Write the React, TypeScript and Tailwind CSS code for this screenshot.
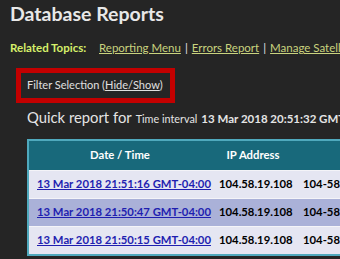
import React from "react";

const rows = [
  { time: "13 Mar 2018 21:51:16 GMT-04:00", ip: "104.58.19.108", host: "104-58-19-108.static.hosting.net", alt: false },
  { time: "13 Mar 2018 21:50:47 GMT-04:00", ip: "104.58.19.108", host: "104-58-19-108.static.hosting.net", alt: true },
  { time: "13 Mar 2018 21:50:15 GMT-04:00", ip: "104.58.19.108", host: "104-58-19-108.static.hosting.net", alt: false },
];

export default function App() {
  return (
    <div className="w-[340px] h-[259px] overflow-hidden bg-[#252525] text-[#e4e4e4] font-['Lato',sans-serif]">
      <h1 className="pl-[10px] pt-[2px] text-[19.5px] leading-[24px] font-bold text-[#e8e8e8]">Database Reports</h1>

      <div className="flex items-center pl-[10px] mt-[15px] text-[11.5px] leading-[14px] whitespace-nowrap">
        <span className="font-bold text-[#d6ef6a] w-[89px] shrink-0">Related Topics:</span>
        <a className="underline text-[#c9d37e]">Reporting Menu</a>
        <span className="px-[4px] text-[#e4e4e4]">|</span>
        <a className="underline text-[#c9d37e]">Errors Report</a>
        <span className="px-[4px] text-[#e4e4e4]">|</span>
        <a className="underline text-[#c9d37e]">Manage Satellites</a>
      </div>

      <div className="ml-[16px] mt-[13px] w-[159px] h-[35px] border-[5px] border-[#c30000] flex items-center pl-[6px] text-[11px] whitespace-nowrap text-[#e0e0e0]">
        Filter Selection (<span className="underline">Hide/Show</span>)
      </div>

      <div className="pl-[27px] mt-[3px] flex items-baseline whitespace-nowrap text-[#e4e4e4]">
        <span className="text-[14.8px] leading-[22px]">Quick report for</span>
        <span className="text-[10.8px] ml-[4px]">Time interval</span>
        <span className="text-[11.5px] ml-[4px] font-bold">13 Mar 2018 20:51:32 GMT-04:00</span>
      </div>

      <div className="ml-[27px] mt-[11px] w-max border-2 border-[#4fa9bd]">
        <table className="table-fixed border-collapse text-[11.3px] whitespace-nowrap">
          <thead>
            <tr className="bg-[#18697b] text-white font-bold h-[29px]">
              <th className="w-[174px] p-0 text-center">Date / Time</th>
              <th className="w-[84px] p-0 text-center">IP Address</th>
              <th className="w-[200px] p-0 text-center">Host Name</th>
            </tr>
          </thead>
          <tbody>
            {rows.map((r) => (
              <tr
                key={r.time}
                className={`${r.alt ? "bg-[#aab1d8]" : "bg-[#e5e6f2]"} h-[28px] border-t border-[#f4f4f8] font-bold text-black`}
              >
                <td className="pl-[8px]">
                  <a className="underline text-[#1f1fb0]">{r.time}</a>
                </td>
                <td className="pl-[8px]">{r.ip}</td>
                <td className="pl-[8px]">{r.host}</td>
              </tr>
            ))}
          </tbody>
        </table>
      </div>
    </div>
  );
}
